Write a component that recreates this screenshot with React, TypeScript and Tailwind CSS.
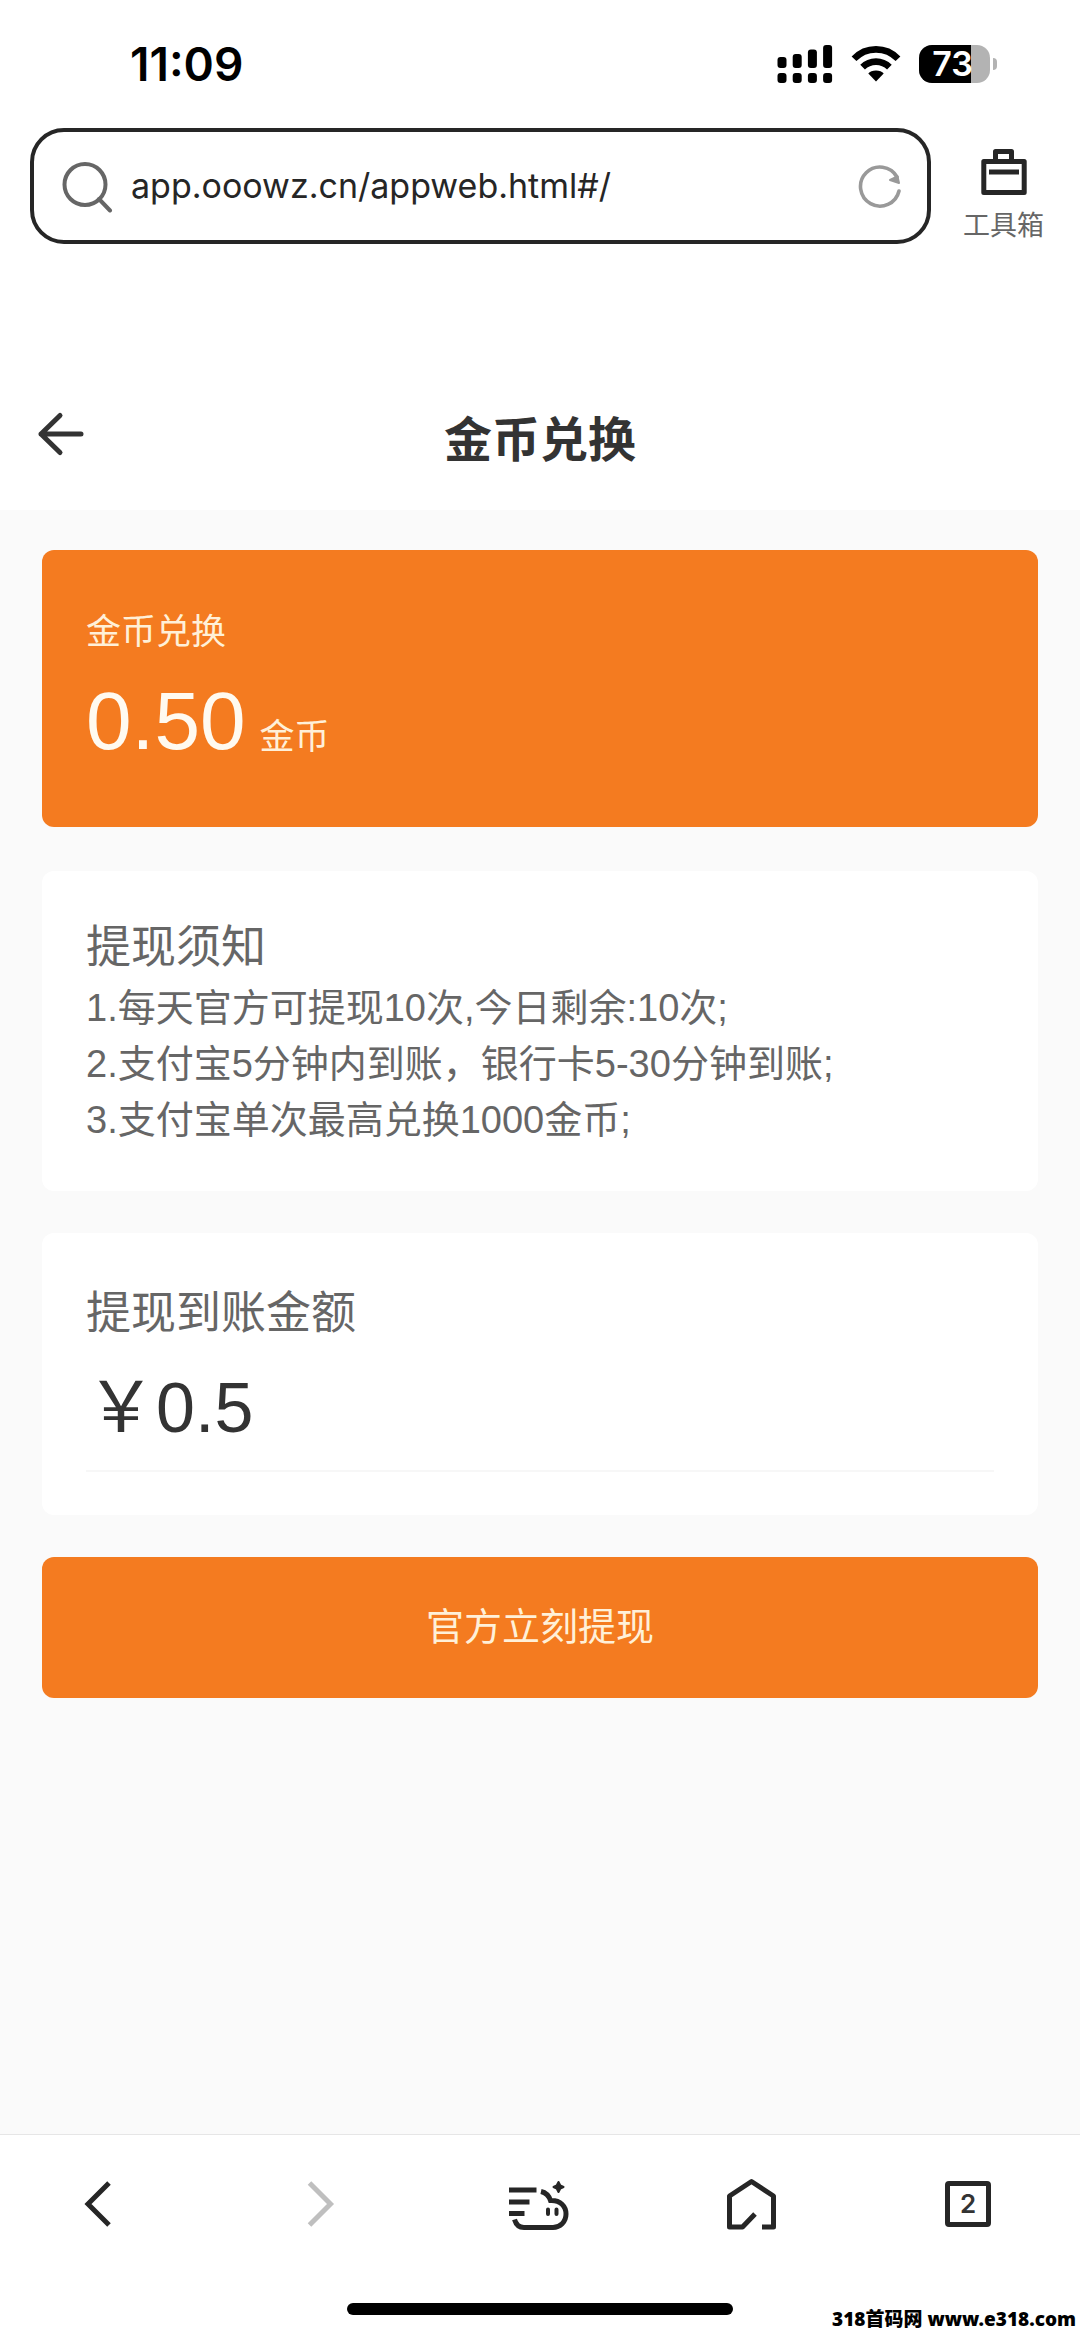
import type { ReactNode } from 'react';

const notices = [
  '1.每天官方可提现10次,今日剩余:10次;',
  '2.支付宝5分钟内到账，银行卡5-30分钟到账;',
  '3.支付宝单次最高兑换1000金币;',
];

function SignalIcon() {
  const tops = [12, 9, 4.5, 0];
  return (
    <svg width="56" height="38" viewBox="0 0 56 38" aria-hidden="true">
      {tops.map((top, i) => (
        <g key={top}>
          <rect x={i * 15.2 + 0.5} y={top} width="9" height={23 - top} rx="3" />
          <rect x={i * 15.2 + 0.5} y="28" width="9" height="10" rx="3" />
        </g>
      ))}
    </svg>
  );
}

function WifiIcon() {
  return (
    <svg width="50" height="38" viewBox="0 0 50 38" aria-hidden="true">
      <path d="M25 36.5 17.3 28.6C20 24.6 30 24.6 32.7 28.6Z" />
      <path d="M11.6 22.2C19 14.8 31 14.8 38.4 22.2" fill="none" stroke="#000" strokeWidth="6.6" />
      <path d="M3 13.8C15 1.2 35 1.2 47 13.8" fill="none" stroke="#000" strokeWidth="6.6" />
    </svg>
  );
}

function Battery({ level }: { level: number }) {
  return (
    <div className="flex items-center gap-[3px]">
      <div className="relative flex h-[38px] w-[71px] items-center justify-center rounded-[13px] bg-[#b3b3b3] pr-[4px]">
        <div className="absolute inset-y-0 left-0 rounded-l-[13px] bg-black" style={{ width: `${level}%` }} />
        <span className="relative text-[34px] leading-[42px] font-semibold text-white">{level}</span>
      </div>
      <div className="h-[12px] w-[4px] rounded-r-full bg-[#b3b3b3]" />
    </div>
  );
}

function StatusBar() {
  return (
    <div className="flex items-center justify-between pt-[38px] pr-[83px] pl-[130px] font-['Inter',sans-serif]">
      <span className="text-[46px] leading-[52px] font-semibold text-black">11:09</span>
      <div className="flex items-center gap-[18px]">
        <SignalIcon />
        <WifiIcon />
        <Battery level={73} />
      </div>
    </div>
  );
}

function AddressBar() {
  return (
    <div className="flex items-center pt-[38px] pr-[36px] pl-[30px]">
      <div className="flex h-[116px] flex-1 items-center rounded-[34px] border-4 border-[#262626] px-[25px]">
        <svg width="54" height="54" viewBox="0 0 54 54" fill="none" stroke="#666" strokeWidth="4" strokeLinecap="round" aria-hidden="true">
          <circle cx="26" cy="25.5" r="20.5" />
          <path d="M40 40 51 51.5" />
        </svg>
        <input
          aria-label="网址"
          defaultValue="app.ooowz.cn/appweb.html#/"
          className="ml-[18px] min-w-0 flex-1 font-['Inter',sans-serif] text-[34px] leading-[48px] text-[#262626] outline-none"
        />
        <button aria-label="刷新">
          <svg width="44" height="44" viewBox="0 0 44 44" fill="none" aria-hidden="true">
            <path d="M41 27A19.5 19.5 0 1 1 39 13" stroke="#999" strokeWidth="3.6" strokeLinecap="round" />
            <path d="M32 16 39.5 12.5 41 19Z" fill="#999" stroke="#999" strokeWidth="2" strokeLinejoin="round" />
          </svg>
        </button>
      </div>
      <button className="ml-[32px] flex flex-col items-center gap-[12px] pt-[20px]">
        <svg width="46" height="48" viewBox="0 0 46 48" fill="none" stroke="#262626" strokeWidth="5" strokeLinejoin="round" aria-hidden="true">
          <rect x="2.8" y="13.5" width="40.4" height="31" />
          <path d="M14.5 13V3.5H30.5V13" />
          <path d="M8 24H38" />
        </svg>
        <span className="text-[27px] leading-[36px] text-[#666]">工具箱</span>
      </button>
    </div>
  );
}

function Card({ children }: { children: ReactNode }) {
  return <section className="rounded-[12px] bg-white px-[44px] pt-[45px] pb-[43px]">{children}</section>;
}

function NavButton({ label, children }: { label: string; children: ReactNode }) {
  return (
    <button aria-label={label} className="flex h-[60px] w-[60px] items-center justify-center">
      {children}
    </button>
  );
}

function BottomNav() {
  return (
    <footer className="relative border-t border-[#e6e6e6] bg-white">
      <nav className="flex justify-between pt-[39px] pr-[82px] pl-[68px]">
        <NavButton label="后退">
          <svg width="60" height="60" viewBox="0 0 60 60" fill="none" stroke="#262626" strokeWidth="5">
            <path d="M41 9 20 30 41 51" />
          </svg>
        </NavButton>
        <NavButton label="前进">
          <svg width="60" height="60" viewBox="0 0 60 60" fill="none" stroke="#bfbfbf" strokeWidth="5">
            <path d="M23.5 9 44.5 30 23.5 51" />
          </svg>
        </NavButton>
        <NavButton label="助手">
          <svg width="72" height="60" viewBox="-2 0 72 60" className="shrink-0" fill="none" stroke="#262626" strokeWidth="5">
            <path d="M10 16H37.5M10 28H30.5M10 39.5H25.5" />
            <path d="M42 17.5C46.5 18.5 50 22 51.5 26.5C61.5 26 67 32.5 67 40C67 48 61 53.5 54 53.5H25C20.5 53.5 17 50.5 15.5 45.5" />
            <path d="M49 35.5V40M57.5 35.5V40" strokeWidth="4" strokeLinecap="round" />
            <path d="M59.5 8 61.2 11.3 64.5 13 61.2 14.7 59.5 18 57.8 14.7 54.5 13 57.8 11.3Z" fill="#262626" strokeWidth="2" strokeLinejoin="round" />
          </svg>
        </NavButton>
        <NavButton label="主页">
          <svg width="60" height="60" viewBox="0 0 60 60" fill="none" stroke="#262626" strokeWidth="5" strokeLinejoin="round">
            <path d="M41 53H52.5V22L30.5 7.5 8.5 22V53H21.5L34 40" />
          </svg>
        </NavButton>
        <NavButton label="标签页">
          <span className="flex h-[46px] w-[46px] items-center justify-center rounded-[4px] border-[5px] border-[#262626] font-['Inter',sans-serif] text-[26px] leading-[30px] font-semibold text-[#333]">
            2
          </span>
        </NavButton>
      </nav>
      <div className="mx-auto mt-[69px] mb-[21px] h-[12px] w-[386px] rounded-full bg-black" />
      <p className="absolute right-[4px] bottom-[4px] font-['Noto_Sans','Noto_Sans_CJK_SC',sans-serif] text-[19px] leading-[26px] font-black text-black">
        318首码网 www.e318.com
      </p>
    </footer>
  );
}

export default function App() {
  return (
    <div className="flex min-h-screen flex-col bg-[#fafafa] font-['Liberation_Sans','Noto_Sans_CJK_SC',sans-serif]">
      <div className="bg-white">
        <StatusBar />
        <AddressBar />
        <header className="relative flex items-center justify-center pt-[164px] pb-[36px]">
          <button aria-label="返回" className="absolute top-[166px] left-[36px]">
            <svg width="50" height="48" viewBox="0 0 50 48" fill="none" stroke="#333" strokeWidth="5" strokeLinecap="round" strokeLinejoin="round">
              <path d="M45 24H5M24 5.5 5 24 24 42.5" />
            </svg>
          </button>
          <h1 className="text-[48px] leading-[66px] font-bold text-[#333]">金币兑换</h1>
        </header>
      </div>

      <main className="flex flex-1 flex-col px-[42px] pt-[40px]">
        <section className="rounded-[12px] bg-[#f47b20] px-[44px] pt-[54px] pb-[58px] text-[#fff0d8]">
          <h2 className="text-[35px] leading-[56px]">金币兑换</h2>
          <p className="mt-[13px] flex items-baseline gap-[14px]">
            <span className="text-[82px] leading-[96px] text-[#fffaf0]">0.50</span>
            <span className="text-[35px]">金币</span>
          </p>
        </section>

        <div className="mt-[44px]">
          <Card>
            <h2 className="text-[45px] leading-[64px] text-[#666]">提现须知</h2>
            <ul className="text-[38px] leading-[56px] text-[#666]">
              {notices.map((notice) => (
                <li key={notice}>{notice}</li>
              ))}
            </ul>
          </Card>
        </div>

        <div className="mt-[42px]">
          <Card>
            <label htmlFor="amount" className="block text-[45px] leading-[72px] text-[#666]">
              提现到账金额
            </label>
            <div className="mt-[16px] flex items-center border-b-2 border-[#f7f7f7] pb-[20px] text-[70px] leading-[84px] text-[#333]">
              <span>￥</span>
              <input id="amount" defaultValue="0.5" className="h-[84px] min-w-0 flex-1 outline-none" />
            </div>
          </Card>
        </div>

        <button className="mt-[42px] h-[141px] rounded-[12px] bg-[#f47b20] text-[38px] text-[#fff0d8]">
          官方立刻提现
        </button>
      </main>

      <BottomNav />
    </div>
  );
}
